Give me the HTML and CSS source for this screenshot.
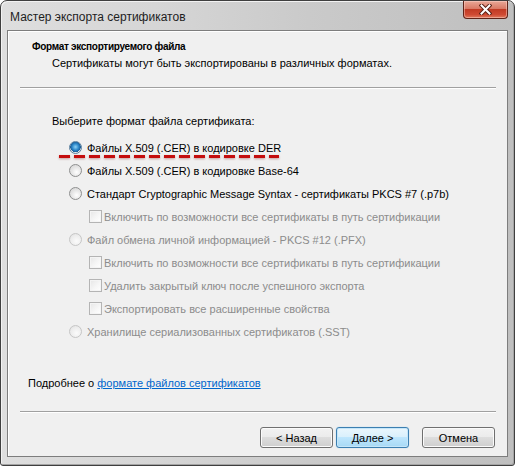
FILE: index.html
```html
<!DOCTYPE html>
<html lang="ru">
<head>
<meta charset="UTF-8">
<title>Мастер экспорта сертификатов</title>
<link rel="stylesheet" href="styles.css">
</head>
<body>
	<div class="window">
		<div class="titlebar">
			<span class="title">Мастер экспорта сертификатов</span>
			<span class="close">
				<svg width="13" height="11" viewBox="0 0 13 11">
					<path d="M2.5 1.5 L10.5 9.5 M10.5 1.5 L2.5 9.5" stroke="#5a2116" stroke-width="4" stroke-linecap="square"/>
					<path d="M2.5 1.5 L10.5 9.5 M10.5 1.5 L2.5 9.5" stroke="#fff" stroke-width="2" stroke-linecap="square"/>
				</svg>
			</span>
		</div>
		<div class="client">
			<div class="header">
				<div class="header-title">Формат экспортируемого файла</div>
				<div class="header-sub">Сертификаты могут быть экспортированы в различных форматах.</div>
			</div>
			<div class="sep sep-top"></div>

			<div class="content">
				<div class="lead">Выберите формат файла сертификата:</div>
				<div class="options">
					<div class="opt">
						<span class="radio checked"></span>Файлы X.509 (.CER) в кодировке DER
						<span class="mark"></span>
					</div>
					<div class="opt">
						<span class="radio"></span>Файлы X.509 (.CER) в кодировке Base-64
					</div>
					<div class="opt">
						<span class="radio"></span>Стандарт Cryptographic Message Syntax - сертификаты PKCS #7 (.p7b)
					</div>
					<div class="opt sub disabled">
						<span class="check"></span>Включить по возможности все сертификаты в путь сертификации
					</div>
					<div class="opt disabled">
						<span class="radio"></span>Файл обмена личной информацией - PKCS #12 (.PFX)
					</div>
					<div class="opt sub disabled">
						<span class="check"></span>Включить по возможности все сертификаты в путь сертификации
					</div>
					<div class="opt sub disabled">
						<span class="check"></span>Удалить закрытый ключ после успешного экспорта
					</div>
					<div class="opt sub disabled">
						<span class="check"></span>Экспортировать все расширенные свойства
					</div>
					<div class="opt disabled">
						<span class="radio"></span>Хранилище сериализованных сертификатов (.SST)
					</div>
				</div>
			</div>

			<div class="more">Подробнее о <a href="#">формате файлов сертификатов</a></div>
			<div class="sep sep-bottom"></div>
			<div class="buttons">
				<button class="btn">&lt; Назад</button>
				<button class="btn default">Далее &gt;</button>
				<button class="btn cancel">Отмена</button>
			</div>
		</div>
	</div>
</body>
</html>
```

FILE: styles.css
```css
html,body{margin: 0;padding: 0;background: #fff;}
body{font-family: "Liberation Sans", Arial, sans-serif;font-size: 11px;color: #000;}

.window{
	width: 515px;
	height: 466px;
	box-sizing: border-box;
	border: 1px solid #3f3f3f;
	border-radius: 7px 7px 3px 3px;
	padding: 0 6px 8px 6px;
	display: flex;
	flex-direction: column;
	background: linear-gradient(to right, #dedede 0%, #d6d6d6 30%, #cacaca 60%, #bfbfbf 100%);
	box-shadow: inset 1px 1px 0 #f2f2f2, inset -1px -1px 0 #a4a4a4;
}
.titlebar{
	height: 29px;
	display: flex;
	justify-content: space-between;
	align-items: flex-start;
	flex: none;
}
.title{
	margin: 8px 0 0 3px;
	font-size: 12px;
	line-height: 16px;
	color: #1e1e1e;
}
.close{
	width: 45px;
	height: 18px;
	box-sizing: border-box;
	border: 1px solid #5f2419;
	border-top: none;
	border-radius: 0 0 4px 4px;
	background: linear-gradient(#e9a897 0%, #d97a66 45%, #c13b24 50%, #cf4a33 80%, #e07a5e 100%);
	box-shadow: inset 0 0 0 1px rgba(255,220,210,.45);
	display: flex;
	align-items: center;
	justify-content: center;
}

.client{
	flex: 1;
	display: flex;
	flex-direction: column;
	border: 1px solid #7d7d7d;
	background: #f0f0f0;
	box-shadow: inset 1px 1px 0 #fff;
}
.header{padding: 8px 0 0 24px;line-height: 16px;}
.header-title{font-weight: bold;font-size: 10px;letter-spacing: -0.3px;}
.header-sub{padding-left: 20px;}
.sep{height: 0;border-top: 1px solid #a0a0a0;border-bottom: 1px solid #fff;margin: 0 11px 0 12px;}
.sep-top{margin-top: 16px;}

.content{padding: 24px 0 0 44px;}
.lead{line-height: 16px;}
.options{margin-top: 7px;}
.opt{
	position: relative;
	height: 23px;
	display: flex;
	align-items: center;
	padding-left: 17px;
}
.opt.sub{padding-left: 37px;}
.disabled{color: #8c8c8c;}

.radio{
	width: 11px;
	height: 11px;
	border: 1px solid #8e8f8f;
	border-radius: 50%;
	margin-right: 5px;
	background: radial-gradient(circle at 60% 65%, #ffffff 0%, #e8e8e8 45%, #cfcfcf 100%);
	flex: none;
}
.disabled .radio{border-color: #c6c6c6;background: radial-gradient(circle at 60% 65%, #fbfbfb 0%, #ececec 60%, #dcdcdc 100%);}
.radio.checked{
	background:
		radial-gradient(circle at 50% 45%, #8ed2f5 0%, #2c87c9 40%, #1a5e99 62%, rgba(0,0,0,0) 66%),
		radial-gradient(circle, #ffffff 0%, #dcdcdc 100%);
	border-color: #5a7f9e;
}
.check{
	width: 11px;
	height: 11px;
	border: 1px solid #b4b4b4;
	margin-right: 2px;
	background: linear-gradient(135deg, #e6e6e6 0%, #f7f7f7 60%, #ffffff 100%);
	box-shadow: inset 0 0 0 1px #f4f4f4;
	flex: none;
}
.mark{
	position: absolute;
	left: 7px;
	top: 19px;
	width: 220px;
	height: 3px;
	background: repeating-linear-gradient(to right, #c40d0d 0, #c40d0d 11px, transparent 11px, transparent 15px);
	filter: drop-shadow(0 1px 1px rgba(120,0,0,.35));
}

.more{margin-top: auto;padding-left: 20px;line-height: 16px;margin-bottom: 20px;}
.more a{color: #0066cc;text-decoration: underline;}
.sep-bottom{margin-bottom: 14px;}
.buttons{
	display: flex;
	justify-content: flex-end;
	padding: 0 12px 8px 0;
	gap: 3px;
}
.btn{
	width: 73px;
	height: 21px;
	padding: 0;
	font-family: inherit;
	font-size: 11px;
	color: #000;
	border: 1px solid #707070;
	border-radius: 3px;
	background: linear-gradient(#f2f2f2 0%, #ebebeb 49%, #dddddd 50%, #cfcfcf 100%);
	box-shadow: inset 0 0 0 1px #fbfbfb;
}
.btn.default{
	border-color: #3c7fb1;
	background: linear-gradient(#eaf6fd 0%, #d9f0fc 49%, #bee6fd 50%, #a7d9f5 100%);
	box-shadow: inset 0 0 0 1px #c5e6f9, 0 0 1px #7fc4ec;
}
.btn.cancel{margin-left: 10px;}
```
